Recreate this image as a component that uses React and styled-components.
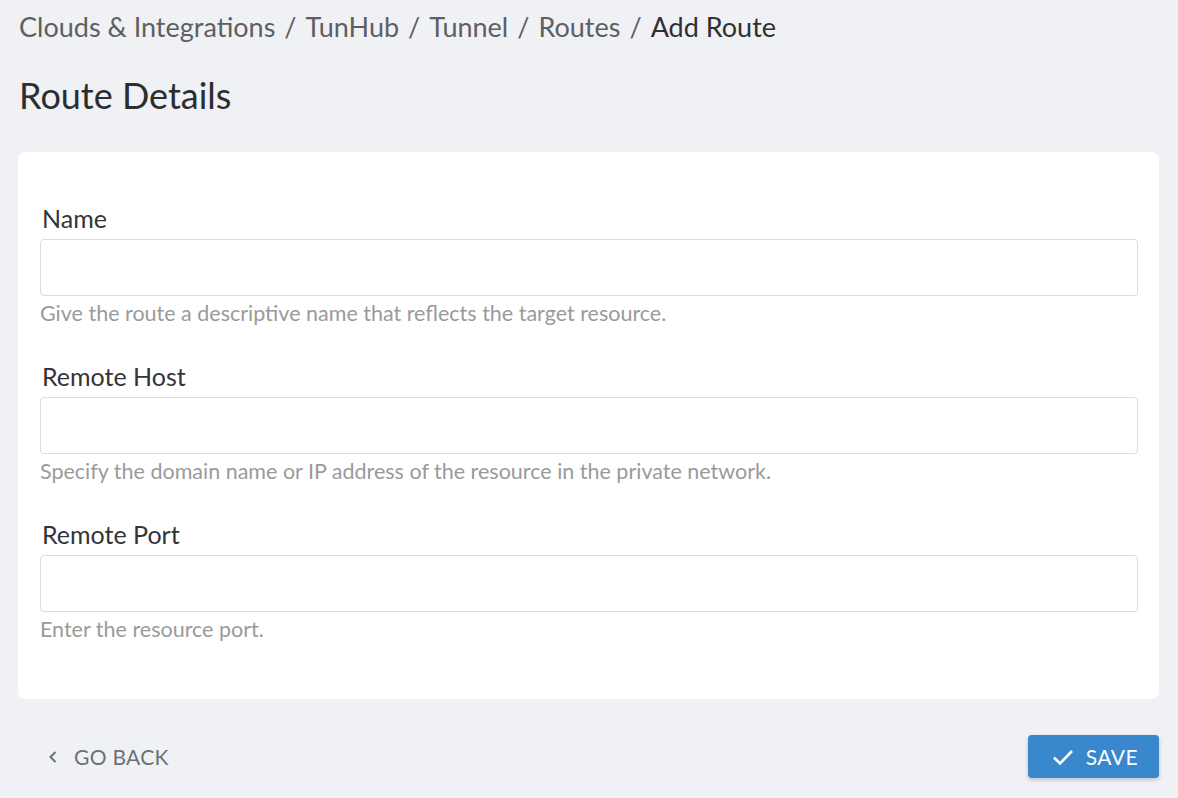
import React from 'react';
import styled, { createGlobalStyle } from 'styled-components';

const GlobalStyle = createGlobalStyle`
  html, body {
    margin: 0;
    padding: 0;
    background: #f0f1f5;
    font-family: Lato, "Open Sans", sans-serif;
  }
`;

const Page = styled.div`
  display: flex;
  flex-direction: column;
  padding: 10px 19px 0 18px;
  height: 798px;
  box-sizing: border-box;
`;

const Breadcrumbs = styled.nav`
  display: flex;
  align-items: center;
  font-size: 27px;
  line-height: 34px;
  color: #5d5f62;
`;

const Crumb = styled.span`
  color: ${(p) => (p.current ? '#2e3033' : '#5d5f62')};
  padding-left: ${(p) => (p.first ? '1px' : '0')};
`;

const Sep = styled.span`
  margin: 0 9px;
`;

const Title = styled.h1`
  margin: 30px 0 0 1px;
  font-size: 36px;
  font-weight: 400;
  line-height: 42px;
  color: #2b2d30;
`;

const Card = styled.section`
  margin-top: 36px;
  background: #fff;
  border-radius: 7px;
  padding: 51px 21px 57px 22px;
  display: flex;
  flex-direction: column;
  gap: 35px;
`;

const Field = styled.div`
  display: flex;
  flex-direction: column;
`;

const Label = styled.label`
  font-size: 25px;
  line-height: 30px;
  color: #333538;
  margin: 0 0 6px 2px;
`;

const Input = styled.input`
  height: 57px;
  box-sizing: border-box;
  border: 1px solid #dcdcdc;
  border-radius: 4px;
  background: #fff;
  font-family: inherit;
  font-size: 20px;
  padding: 0 16px;
  outline: none;
`;

const Help = styled.p`
  margin: 4px 0 0;
  font-size: 21.5px;
  line-height: 26px;
  color: #9a9a9a;
`;

const Footer = styled.div`
  display: flex;
  justify-content: space-between;
  align-items: center;
  margin-top: 36px;
`;

const BackButton = styled.button`
  display: flex;
  align-items: center;
  gap: 16px;
  background: none;
  border: none;
  padding: 0 0 0 30px;
  font-family: inherit;
  font-size: 21px;
  letter-spacing: 0.3px;
  color: #6a7176;
  cursor: pointer;
`;

const SaveButton = styled.button`
  display: flex;
  align-items: center;
  gap: 12px;
  height: 43px;
  padding: 0 21px 0 24px;
  border: none;
  border-radius: 4px;
  background: #3987cd;
  color: #fff;
  font-family: inherit;
  font-size: 21px;
  letter-spacing: 0.4px;
  box-shadow: 0 2px 4px rgba(0, 0, 0, 0.2);
  cursor: pointer;
`;

const fields = [
  { label: 'Name', help: 'Give the route a descriptive name that reflects the target resource.' },
  { label: 'Remote Host', help: 'Specify the domain name or IP address of the resource in the private network.' },
  { label: 'Remote Port', help: 'Enter the resource port.' },
];

const crumbs = ['Clouds & Integrations', 'TunHub', 'Tunnel', 'Routes'];

const App = () => (
  <>
    <GlobalStyle />
    <Page>
      <Breadcrumbs>
        {crumbs.map((c, i) => (
          <React.Fragment key={c}>
            <Crumb first={i === 0}>{c}</Crumb>
            <Sep>/</Sep>
          </React.Fragment>
        ))}
        <Crumb current>Add Route</Crumb>
      </Breadcrumbs>
      <Title>Route Details</Title>
      <Card>
        {fields.map((f) => (
          <Field key={f.label}>
            <Label>{f.label}</Label>
            <Input type="text" />
            <Help>{f.help}</Help>
          </Field>
        ))}
      </Card>
      <Footer>
        <BackButton>
          <svg width="10" height="14" viewBox="0 0 10 14" fill="none">
            <path d="M7.5 2 L2.5 7 L7.5 12" stroke="#6a7176" strokeWidth="2" />
          </svg>
          GO BACK
        </BackButton>
        <SaveButton>
          <svg width="22" height="18" viewBox="0 0 22 18" fill="none">
            <path d="M2 9.5 L8 15.5 L20 3" stroke="#fff" strokeWidth="2.6" />
          </svg>
          SAVE
        </SaveButton>
      </Footer>
    </Page>
  </>
);

export default App;
